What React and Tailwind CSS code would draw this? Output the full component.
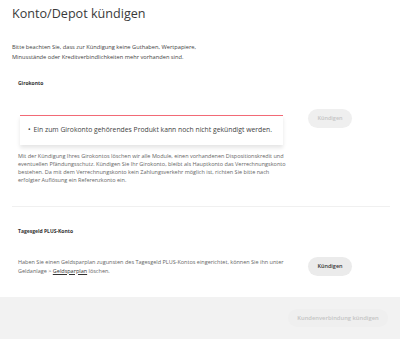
import React from 'react'

function Button({ children, disabled, className = '' }) {
  return (
    <button
      disabled={disabled}
      className={`rounded-full flex items-center justify-center font-semibold ${
        disabled ? 'bg-[#efefef] text-[#c4c4c4]' : 'bg-[#ebebeb] text-[#333]'
      } ${className}`}
    >
      {children}
    </button>
  )
}

export default function App() {
  return (
    <div className="w-[400px] h-[349px] bg-white text-[#333] overflow-hidden" style={{ fontFamily: '"Open Sans", Lato, sans-serif' }}>
      <div className="px-[12px]">
        <h1 className="pt-[5px] text-[12.6px] leading-[17px] font-normal text-[#3a3a3a]">Konto/Depot kündigen</h1>
        <p className="mt-[20px] text-[5.7px] leading-[10px] text-[#444] whitespace-nowrap">
          Bitte beachten Sie, dass zur Kündigung keine Guthaben, Wertpapiere,
          <br />
          Minusstände oder Kreditverbindlichkeiten mehr vorhanden sind.
        </p>
      </div>

      {/* Girokonto */}
      <section className="px-[18px] mt-[17px]">
        <h2 className="text-[5px] leading-[8px] font-bold">Girokonto</h2>
        <div className="flex mt-[22px]">
          <div className="w-[265px] pl-[2px]">
            <div className="mt-[6px] h-[30px] bg-white [border-top:1px_solid_#f26a76] shadow-[0_3px_4px_rgba(0,0,0,0.1)] flex items-center pl-[8px] text-[6.8px] text-[#444] whitespace-nowrap">
              <span className="mr-[3px]">•</span>
              Ein zum Girokonto gehörendes Produkt kann noch nicht gekündigt werden.
            </div>
          </div>
          <Button disabled className="ml-[25px] w-[44px] h-[19px] text-[5.5px]">Kündigen</Button>
        </div>
        <p className="mt-[7px] text-[5.5px] leading-[8px] text-[#666] whitespace-nowrap">
          Mit der Kündigung Ihres Girokontos löschen wir alle Module, einen vorhandenen Dispositionskredit und
          <br />
          eventuellen Pfändungsschutz. Kündigen Sie Ihr Girokonto, bleibt als Hauptkonto das Verrechnungskonto
          <br />
          bestehen. Da mit dem Verrechnungskonto kein Zahlungsverkehr möglich ist, richten Sie bitte nach
          <br />
          erfolgter Auflösung ein Referenzkonto ein.
        </p>
      </section>

      <div className="mx-[12px] mt-[22px] w-[378px] h-[1px] bg-[#f0f0f0]" />

      {/* Tagesgeld PLUS-Konto */}
      <section className="px-[18px] mt-[20px]">
        <h2 className="text-[5px] leading-[8px] font-bold">Tagesgeld PLUS-Konto</h2>
        <div className="flex items-center mt-[22px]">
          <p className="w-[265px] text-[5.5px] leading-[9px] text-[#666] whitespace-nowrap">
            Haben Sie einen Geldsparplan zugunsten des Tagesgeld PLUS-Kontos eingerichtet, können Sie ihn unter
            <br />
            Geldanlage &gt; <span className="underline text-[#333]">Geldsparplan</span> löschen.
          </p>
          <Button className="ml-[25px] w-[44px] h-[19px] text-[5.5px]">Kündigen</Button>
        </div>
      </section>

      {/* Footer */}
      <footer className="mt-[21px] h-[42px] bg-[#f2f2f2] flex items-center justify-end pr-[12px]">
        <Button disabled className="w-[100px] h-[18px] bg-[#ececec] text-[5.8px] font-normal">Kundenverbindung kündigen</Button>
      </footer>
    </div>
  )
}
